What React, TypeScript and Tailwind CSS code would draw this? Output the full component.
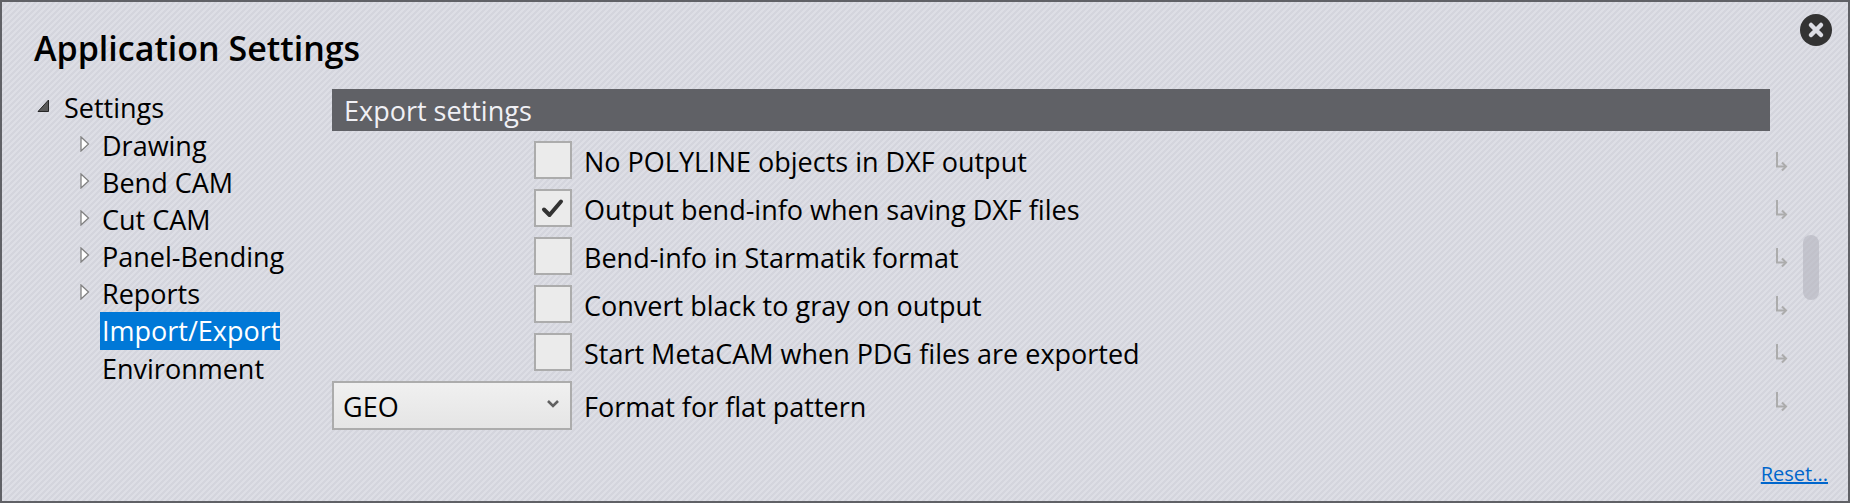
import { useState } from 'react'
import clsx from 'clsx'

const treeItems = [
  { name: 'Drawing', expandable: true },
  { name: 'Bend CAM', expandable: true },
  { name: 'Cut CAM', expandable: true },
  { name: 'Panel-Bending', expandable: true },
  { name: 'Reports', expandable: true },
  { name: 'Import/Export', expandable: false },
  { name: 'Environment', expandable: false },
]

const initialOptions = [
  { id: 'no-polyline', label: 'No POLYLINE objects in DXF output', checked: false },
  { id: 'bend-info', label: 'Output bend-info when saving DXF files', checked: true },
  { id: 'starmatik', label: 'Bend-info in Starmatik format', checked: false },
  { id: 'black-to-gray', label: 'Convert black to gray on output', checked: false },
  { id: 'start-metacam', label: 'Start MetaCAM when PDG files are exported', checked: false },
]

function ExpandedArrow() {
  return (
    <svg className="mb-1 h-[13px] w-3" viewBox="0 0 12 13" aria-hidden="true">
      <path d="M11.5 1V12.5H1Z" fill="#595959" stroke="#262626" />
    </svg>
  )
}

function CollapsedArrow() {
  return (
    <svg className="mb-1 h-4 w-2.5" viewBox="0 0 10 16" aria-hidden="true">
      <path d="M1 1L8.5 8L1 15Z" fill="#fff" stroke="#818181" strokeWidth="1.3" />
    </svg>
  )
}

function ScopeArrow() {
  return (
    <svg className="mt-[11px] h-5 w-3 shrink-0" viewBox="0 0 12 20" fill="none" aria-hidden="true">
      <path d="M1 0V15" stroke="#acacac" strokeWidth="2" />
      <path d="M0 14.5H10" stroke="#acacac" strokeWidth="2" />
      <path d="M6 10.5L10 14.5L6 18.5" stroke="#acacac" strokeWidth="2" />
    </svg>
  )
}

function CheckBox({ id, checked, onChange }: { id: string; checked: boolean; onChange: () => void }) {
  return (
    <span className="relative h-[38px] w-[38px] shrink-0">
      <input
        id={id}
        type="checkbox"
        checked={checked}
        onChange={onChange}
        className="block h-full w-full appearance-none border-2 border-[#acacac] bg-[#ebebeb]"
      />
      {checked && (
        <svg className="pointer-events-none absolute inset-0" viewBox="0 0 38 38" fill="none" aria-hidden="true">
          <path d="M10 20.5L15.5 26L27 12.5" stroke="#333" strokeWidth="4" strokeLinecap="round" strokeLinejoin="round" />
        </svg>
      )}
    </span>
  )
}

export default function App() {
  const [selected, setSelected] = useState('Import/Export')
  const [options, setOptions] = useState(initialOptions)
  const [format, setFormat] = useState('GEO')

  const toggle = (id: string) =>
    setOptions((prev) => prev.map((o) => (o.id === id ? { ...o, checked: !o.checked } : o)))

  return (
    <main className="flex min-h-screen flex-col border-2 border-[#606166] bg-[linear-gradient(135deg,#dddee5_25%,#d4d5dd_25%,#d4d5dd_50%,#dddee5_50%,#dddee5_75%,#d4d5dd_75%)] bg-size-[6px_6px] font-['Open_Sans',sans-serif] text-[27px] leading-[37px] text-black">
      <header className="flex items-start justify-between pt-3 pr-4 pl-8">
        <h1 className="pt-[11px] text-[34px] leading-[46px] font-semibold">Application Settings</h1>
        <button type="button" aria-label="Close" className="h-8 w-8">
          <svg viewBox="0 0 32 32" aria-hidden="true">
            <circle cx="16" cy="16" r="16" fill="#333" />
            <path d="M11 11L21 21M21 11L11 21" stroke="#dcdde4" strokeWidth="4.5" strokeLinecap="round" />
          </svg>
        </button>
      </header>

      <div className="flex grow pt-[18px] pl-[35px]">
        <nav aria-label="Settings sections" className="w-[295px] shrink-0">
          <button type="button" className="mb-px flex items-center gap-[15px]">
            <ExpandedArrow />
            Settings
          </button>
          <ul className="pl-[43px]">
            {treeItems.map((item) => (
              <li key={item.name} className="flex items-center gap-[10px]">
                <span className="w-2.5">{item.expandable && <CollapsedArrow />}</span>
                <button
                  type="button"
                  onClick={() => setSelected(item.name)}
                  className={clsx('pl-0.5', selected === item.name && 'bg-[#0078d7] leading-[38px] text-white')}
                >
                  {item.name}
                </button>
              </li>
            ))}
          </ul>
        </nav>

        <section className="min-w-0 grow">
          <h2 className="mr-[18px] bg-[#606166] pt-[3px] pb-px pl-3 leading-[38px] text-[#f0f0f5]">Export settings</h2>
          <div className="mt-[10px] flex flex-col gap-[10px]">
            {options.map((o) => (
              <div key={o.id} className="flex gap-3 pl-[202px]">
                <CheckBox id={o.id} checked={o.checked} onChange={() => toggle(o.id)} />
                <label htmlFor={o.id} className="grow pt-1 leading-[34px]">
                  {o.label}
                </label>
                <ScopeArrow />
              </div>
            ))}
            <div className="flex gap-3">
              <div className="relative h-[49px] w-60">
                <select
                  id="format"
                  value={format}
                  onChange={(e) => setFormat(e.target.value)}
                  className="h-full w-full appearance-none border-2 border-[#acacac] bg-linear-to-b from-[#f0f0f0] to-[#e5e5e5] pt-0.5 pl-[9px]"
                >
                  <option>GEO</option>
                  <option>DXF</option>
                </select>
                <svg className="pointer-events-none absolute top-[18px] right-[13px] h-3 w-3" viewBox="0 0 12 12" fill="none" aria-hidden="true">
                  <path d="M1 2L6 7L11 2" stroke="#606060" strokeWidth="2.6" />
                </svg>
              </div>
              <label htmlFor="format" className="grow pt-2 leading-[36px]">
                Format for flat pattern
              </label>
              <ScopeArrow />
            </div>
          </div>
        </section>

        <div className="w-[60px] shrink-0 pt-[146px] pl-[15px]">
          <div className="h-[65px] w-4 rounded-full bg-[#b4b4be]/60" />
        </div>
      </div>

      <footer className="flex justify-end pr-5 pb-3">
        <a href="#reset" className="text-[20px] leading-[30px] text-[#0066cc] underline">
          Reset...
        </a>
      </footer>
    </main>
  )
}
